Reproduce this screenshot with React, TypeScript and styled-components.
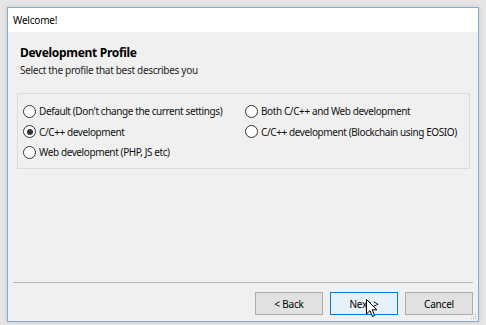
import React from 'react';
import styled, { createGlobalStyle } from 'styled-components';

const GlobalStyle = createGlobalStyle`
  html, body {
    margin: 0;
    padding: 0;
    background: #e6e6e6;
    overflow: hidden;
  }
  body {
    font-family: "Noto Sans", "Open Sans", sans-serif;
    font-size: 10px;
    color: #1b1b1b;
  }
`;

const profiles = [
  { label: "Default (Don't change the current settings)", checked: false },
  { label: 'Both C/C++ and Web development', checked: false },
  { label: 'C/C++ development', checked: true },
  { label: 'C/C++ development (Blockchain using EOSIO)', checked: false },
  { label: 'Web development (PHP, JS etc)', checked: false },
];

function App() {
  return (
    <Page>
      <GlobalStyle />
      <Window>
        <TitleBar>Welcome!</TitleBar>
        <Body>
          <Header>
            <HeaderTitle>Development Profile</HeaderTitle>
            <HeaderText>Select the profile that best describes you</HeaderText>
          </Header>

          <ProfileGroup>
            {profiles.map((p) => (
              <RadioRow key={p.label}>
                <RadioMark $checked={p.checked} />
                {p.label}
              </RadioRow>
            ))}
          </ProfileGroup>

          <Footer>
            <Separator />
            <ButtonRow>
              <DialogButton>&lt; Back</DialogButton>
              <DialogButton $hover>
                Next &gt;
                <Cursor viewBox="0 0 12 19" width="12" height="19">
                  <path
                    d="M0.5 0.5 L0.5 15 L4 11.6 L6.4 17.5 L8.6 16.6 L6.2 10.8 L10.8 10.8 Z"
                    fill="#fff"
                    stroke="#000"
                    strokeWidth="1"
                    strokeLinejoin="round"
                  />
                </Cursor>
              </DialogButton>
              <DialogButton>Cancel</DialogButton>
            </ButtonRow>
          </Footer>
          <Grip viewBox="0 0 6 6" width="6" height="6">
            <rect x="4" y="0" width="1" height="1" fill="#b5b5b5" />
            <rect x="2" y="2" width="1" height="1" fill="#b5b5b5" />
            <rect x="4" y="2" width="1" height="1" fill="#b5b5b5" />
            <rect x="0" y="4" width="1" height="1" fill="#b5b5b5" />
            <rect x="2" y="4" width="1" height="1" fill="#b5b5b5" />
            <rect x="4" y="4" width="1" height="1" fill="#b5b5b5" />
          </Grip>
        </Body>
      </Window>
    </Page>
  );
}

export default App;

const Page = styled.div`
  width: 486px;
  height: 325px;
  padding: 7px 0 0 7px;
  box-sizing: border-box;
  display: flex;
  align-items: flex-start;
`;

const Window = styled.div`
  width: 472px;
  height: 315px;
  box-sizing: border-box;
  min-width: 0;
  display: flex;
  flex-direction: column;
  border: 1px solid #86a9d3;
  background: #f0f0f0;
  box-shadow: 0 0 6px rgba(0, 0, 0, 0.12);
`;

const TitleBar = styled.div`
  height: 24px;
  flex-shrink: 0;
  background: #ffffff;
  padding-left: 5px;
  display: flex;
  align-items: center;
  font-size: 10px;
  letter-spacing: -0.2px;
  color: #000;
`;

const Body = styled.div`
  flex: 1;
  min-width: 0;
  position: relative;
  display: flex;
  flex-direction: column;
  padding: 0 5px 0 9px;
`;

const Header = styled.div`
  padding: 12px 0 0 3px;
  box-sizing: border-box;
  height: 61px;
`;

const HeaderTitle = styled.div`
  font-size: 12px;
  font-weight: 700;
  color: #000;
  line-height: 18px;
  letter-spacing: -0.3px;
`;

const HeaderText = styled.div`
  font-size: 10px;
  line-height: 16px;
  color: #222;
  letter-spacing: -0.3px;
`;

const ProfileGroup = styled.div`
  margin-right: 3px;
  height: 76px;
  border: 1px solid #dcdcdc;
  background: #f0f0f0;
  display: grid;
  grid-template-columns: 222px minmax(0, 1fr);
  grid-auto-rows: 20.5px;
  align-content: start;
  padding: 7px 0 0 5px;
  box-sizing: border-box;
`;

const RadioRow = styled.label`
  display: flex;
  align-items: center;
  gap: 3px;
  font-size: 10px;
  letter-spacing: -0.4px;
  color: #111;
  white-space: nowrap;
`;

const RadioMark = styled.span`
  width: 11px;
  height: 11px;
  border-radius: 50%;
  border: 1px solid #333;
  background: #fff;
  flex-shrink: 0;
  display: flex;
  align-items: center;
  justify-content: center;

  &::after {
    content: '';
    width: 6px;
    height: 6px;
    border-radius: 50%;
    background: #333;
    display: ${({ $checked }: { $checked?: boolean }) => ($checked ? 'block' : 'none')};
  }
`;

const Footer = styled.div`
  margin-top: auto;
  margin-left: -4px;
  padding-bottom: 6px;
`;

const Separator = styled.div`
  height: 1px;
  background: #a0a0a0;
  opacity: 0.7;
`;

const ButtonRow = styled.div`
  display: flex;
  justify-content: flex-end;
  gap: 7px;
  margin-top: 9px;
`;

const DialogButton = styled.button<{ $hover?: boolean }>`
  position: relative;
  width: 68px;
  height: 23px;
  box-sizing: border-box;
  font-family: "Noto Sans", "Open Sans", sans-serif;
  font-size: 10px;
  letter-spacing: -0.2px;
  color: #000;
  background: ${({ $hover }) => ($hover ? '#e5f1fb' : '#e1e1e1')};
  border: 1px solid ${({ $hover }) => ($hover ? '#0078d7' : '#adadad')};
  padding: 0;
`;

const Cursor = styled.svg`
  position: absolute;
  left: 35px;
  top: 6px;
`;

const Grip = styled.svg`
  position: absolute;
  right: 1px;
  bottom: 1px;
`;
